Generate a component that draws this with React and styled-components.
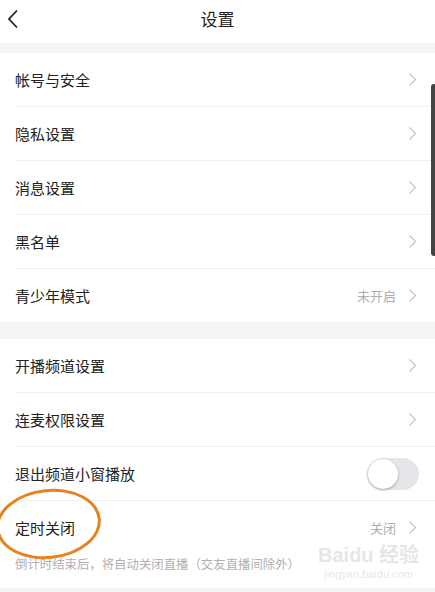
import React from "react";
import styled, { createGlobalStyle } from "styled-components";

const GlobalStyle = createGlobalStyle`
  html, body {
    margin: 0;
    padding: 0;
    background: #f5f5f7;
    font-family: "Noto Sans CJK SC", "Noto Sans", sans-serif;
  }
`;

const groups = [
  [
    { label: "帐号与安全" },
    { label: "隐私设置" },
    { label: "消息设置" },
    { label: "黑名单" },
    { label: "青少年模式", value: "未开启" },
  ],
  [
    { label: "开播频道设置" },
    { label: "连麦权限设置" },
    { label: "退出频道小窗播放", toggle: true },
    {
      label: "定时关闭",
      value: "关闭",
      note: "倒计时结束后，将自动关闭直播（交友直播间除外）",
    },
  ],
];

const Chevron = () => (
  <svg width="9" height="15" viewBox="0 0 9 15">
    <path d="M1.5 1.5 L7.5 7.5 L1.5 13.5" fill="none" stroke="#c6c6c6" strokeWidth="1.3" />
  </svg>
);

const App = () => {
  return (
    <Page>
      <GlobalStyle />
      <Header>
        <BackButton>
          <svg width="12" height="20" viewBox="0 0 12 20">
            <path d="M10 1.5 L2 10 L10 18.5" fill="none" stroke="#222" strokeWidth="1.8" />
          </svg>
        </BackButton>
        <Title>设置</Title>
      </Header>
      {groups.map((rows, gi) => (
        <Group key={gi}>
          {rows.map((row) => (
            <Row key={row.label} $tall={!!row.note}>
              <RowMain>
                <Label>{row.label}</Label>
                {row.toggle ? (
                  <Toggle>
                    <Knob />
                  </Toggle>
                ) : (
                  <Right>
                    {row.value && <Value>{row.value}</Value>}
                    <Chevron />
                  </Right>
                )}
              </RowMain>
              {row.note && <Note>{row.note}</Note>}
            </Row>
          ))}
        </Group>
      ))}
      <Scrollbar />
      <Circle />
      <Watermark>
        <span>Bai<b>du</b> 经验</span>
        <small>jingyan.baidu.com</small>
      </Watermark>
    </Page>
  );
};

const Page = styled.div`
  position: relative;
  width: 435px;
  height: 592px;
  overflow: hidden;
  background: #f5f5f7;
`;

const Header = styled.div`
  position: relative;
  height: 43px;
  background: #fff;
  display: flex;
  align-items: center;
  justify-content: center;
  margin-bottom: 10px;
`;

const BackButton = styled.div`
  position: absolute;
  left: 7px;
  top: 9px;
  display: flex;
`;

const Title = styled.div`
  font-size: 17px;
  color: #222;
  margin-top: -6px;
`;

const Group = styled.div`
  background: #fff;
  padding-left: 15px;
  margin-bottom: 17px;
`;

const Row = styled.div`
  height: ${(p) => (p.$tall ? "87px" : "53px")};
  border-bottom: 1px solid #f0f0f0;
  display: flex;
  flex-direction: column;
  justify-content: ${(p) => (p.$tall ? "flex-start" : "center")};
  &:last-child {
    border-bottom: none;
  }
`;

const RowMain = styled.div`
  height: 53px;
  display: flex;
  align-items: center;
  justify-content: space-between;
  padding-right: 18px;
`;

const Label = styled.div`
  font-size: 15px;
  color: #222;
`;

const Right = styled.div`
  display: flex;
  align-items: center;
  gap: 12px;
`;

const Value = styled.div`
  font-size: 13px;
  color: #adadad;
`;

const Toggle = styled.div`
  width: 51px;
  height: 32px;
  border-radius: 16px;
  background: #e6e6ea;
  display: flex;
  align-items: center;
  padding-left: 1px;
  margin-right: -2px;
`;

const Knob = styled.div`
  width: 30px;
  height: 30px;
  border-radius: 50%;
  background: #fff;
  box-shadow: 0 1px 3px rgba(0, 0, 0, 0.3);
`;

const Note = styled.div`
  margin-top: 1px;
  font-size: 12.4px;
  color: #b0b0b0;
`;

const Scrollbar = styled.div`
  position: absolute;
  right: 0;
  top: 84px;
  width: 4px;
  height: 172px;
  background: #444;
  border-radius: 3px 0 0 3px;
`;

const Circle = styled.div`
  position: absolute;
  left: -4px;
  top: 489px;
  width: 99px;
  height: 64px;
  border: 3px solid #e9811f;
  border-radius: 50%;
  transform: rotate(-6deg);
`;

const Watermark = styled.div`
  position: absolute;
  left: 318px;
  top: 543px;
  display: flex;
  flex-direction: column;
  align-items: center;
  color: rgba(205, 205, 205, 0.5);
  font-family: "Liberation Sans", "Noto Sans CJK SC", sans-serif;
  span {
    font-size: 20px;
    font-weight: bold;
    line-height: 24px;
  }
  small {
    font-size: 11px;
    line-height: 14px;
  }
`;

export default App;
